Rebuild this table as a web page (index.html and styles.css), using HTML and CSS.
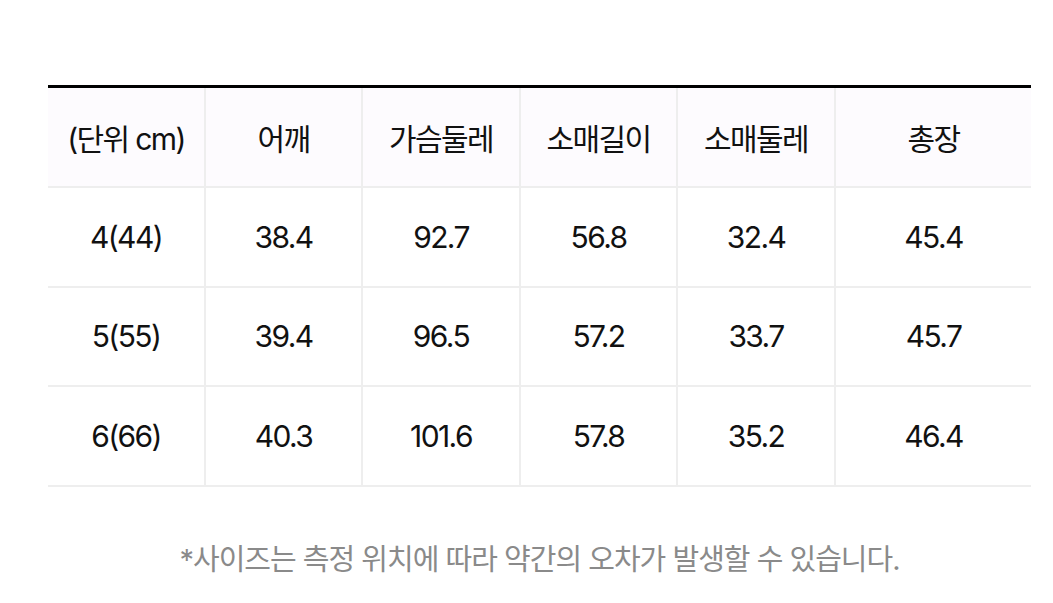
FILE: index.html
```html
<!DOCTYPE html>
<html lang="ko">
<head>
<meta charset="utf-8">
<link rel="stylesheet" href="styles.css">
</head>
<body>
<div class="page">
  <table class="size">
    <colgroup>
      <col class="c1"><col class="c2"><col class="c3"><col class="c4"><col class="c5"><col class="c6">
    </colgroup>
    <thead>
      <tr><th>(단위 cm)</th><th>어깨</th><th>가슴둘레</th><th>소매길이</th><th>소매둘레</th><th>총장</th></tr>
    </thead>
    <tbody>
      <tr><td>4(44)</td><td>38.4</td><td>92.7</td><td>56.8</td><td>32.4</td><td>45.4</td></tr>
      <tr><td>5(55)</td><td>39.4</td><td>96.5</td><td>57.2</td><td>33.7</td><td>45.7</td></tr>
      <tr><td>6(66)</td><td>40.3</td><td>101.6</td><td>57.8</td><td>35.2</td><td>46.4</td></tr>
    </tbody>
  </table>
  <p class="note">*사이즈는 측정 위치에 따라 약간의 오차가 발생할 수 있습니다.</p>
</div>
</body>
</html>
```
FILE: styles.css
```css
html, body { margin: 0; padding: 0; background: #fff; }
body {
  font-family: Inter, "Noto Sans CJK KR", sans-serif;
  color: #111;
}
.page {
  width: 1053px;
  padding: 85px 22px 0 48px;
  box-sizing: border-box;
}
.size {
  width: 983px;
  border-collapse: collapse;
  table-layout: fixed;
  border-top: 3px solid #000;
}
.c1, .c2, .c4 { width: 157px; }
.c3, .c5 { width: 158px; }
.c6 { width: 196px; }
.size th, .size td {
  height: 97.5px;
  padding: 0;
  text-align: center;
  vertical-align: middle;
  font-size: 30px;
  font-weight: 400;
  letter-spacing: -1.6px;
  border-bottom: 2px solid #eeeeee;
  border-left: 2px solid #eeeeee;
}
.size th:first-child, .size td:first-child { border-left: none; }
.size thead th { background: #fdfbfe; height: 98px; }
.note {
  margin: 49px 0 0 0;
  width: 983px;
  text-align: center;
  font-size: 29px;
  color: #8a8a8a;
  letter-spacing: -1px;
}
```
